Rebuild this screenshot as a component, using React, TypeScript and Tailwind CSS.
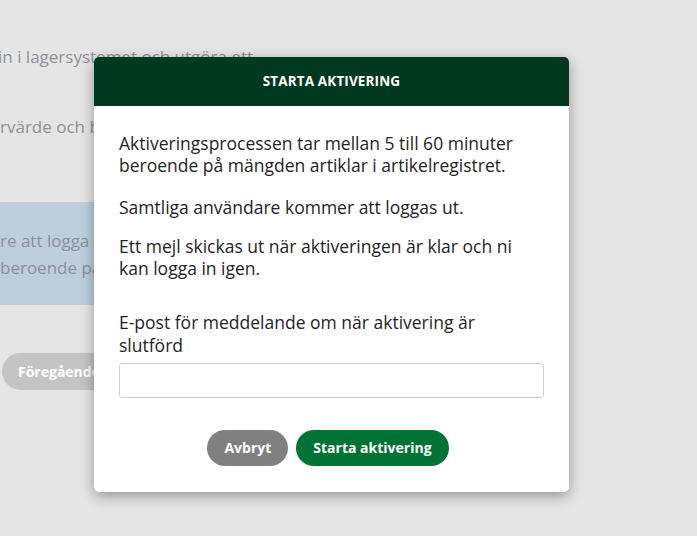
import React from 'react';

const font = { fontFamily: '"Open Sans", "Noto Sans", sans-serif' };

function Background() {
  return (
    <div className="flex flex-col w-full h-full bg-[#e5e5e5] text-[#8d9196] text-[17px] leading-[24px] pt-[45px]">
      <p className="whitespace-nowrap -ml-[2px]">in i lagersystemet och utgöra ett</p>
      <p className="whitespace-nowrap mt-[46px]">rvärde och b</p>
      <div className="mt-[63px] w-[200px] h-[103px] bg-[#bccfdb] flex flex-col justify-center leading-[27px]">
        <p className="whitespace-nowrap">re att logga</p>
        <p className="whitespace-nowrap">beroende på</p>
      </div>
      <div className="mt-[48px] pl-[2px]">
        <button className="h-[37px] w-[150px] rounded-full bg-[#c4c4c4] text-white text-[14px] font-bold text-left pl-[16px]">
          Föregående
        </button>
      </div>
    </div>
  );
}

export default function App() {
  return (
    <div className="relative w-[697px] h-[536px] overflow-hidden" style={font}>
      <Background />
      <div className="absolute left-[94px] top-[57px] w-[475px] bg-white rounded-[5px] shadow-[0_4px_14px_rgba(0,0,0,0.35)] overflow-hidden">
        <div className="h-[49px] bg-[#003820] flex items-center justify-center">
          <h2 className="text-white text-[13.5px] font-bold tracking-[0.01em]">STARTA AKTIVERING</h2>
        </div>
        <div className="px-[25px] pt-[26px] pb-[26px] text-[#1f2328] text-[17.5px] leading-[22px]">
          <p>Aktiveringsprocessen tar mellan 5 till 60 minuter<br />beroende på mängden artiklar i artikelregistret.</p>
          <p className="mt-[20px]">Samtliga användare kommer att loggas ut.</p>
          <p className="mt-[17px]">Ett mejl skickas ut när aktiveringen är klar och ni<br />kan logga in igen.</p>
          <label className="block mt-[32px] leading-[23px]">E-post för meddelande om när aktivering är<br />slutförd</label>
          <input type="text" className="block mt-[6px] w-full h-[35px] border border-[#cfcfcf] rounded-[3px] outline-none px-2" />
          <div className="mt-[32px] pr-[7px] flex justify-center gap-[8px]">
            <button className="h-[36px] px-[17px] rounded-full bg-[#808080] text-white text-[14px] font-bold">Avbryt</button>
            <button className="h-[36px] px-[17px] rounded-full bg-[#007233] text-white text-[14px] font-bold">Starta aktivering</button>
          </div>
        </div>
      </div>
    </div>
  );
}
